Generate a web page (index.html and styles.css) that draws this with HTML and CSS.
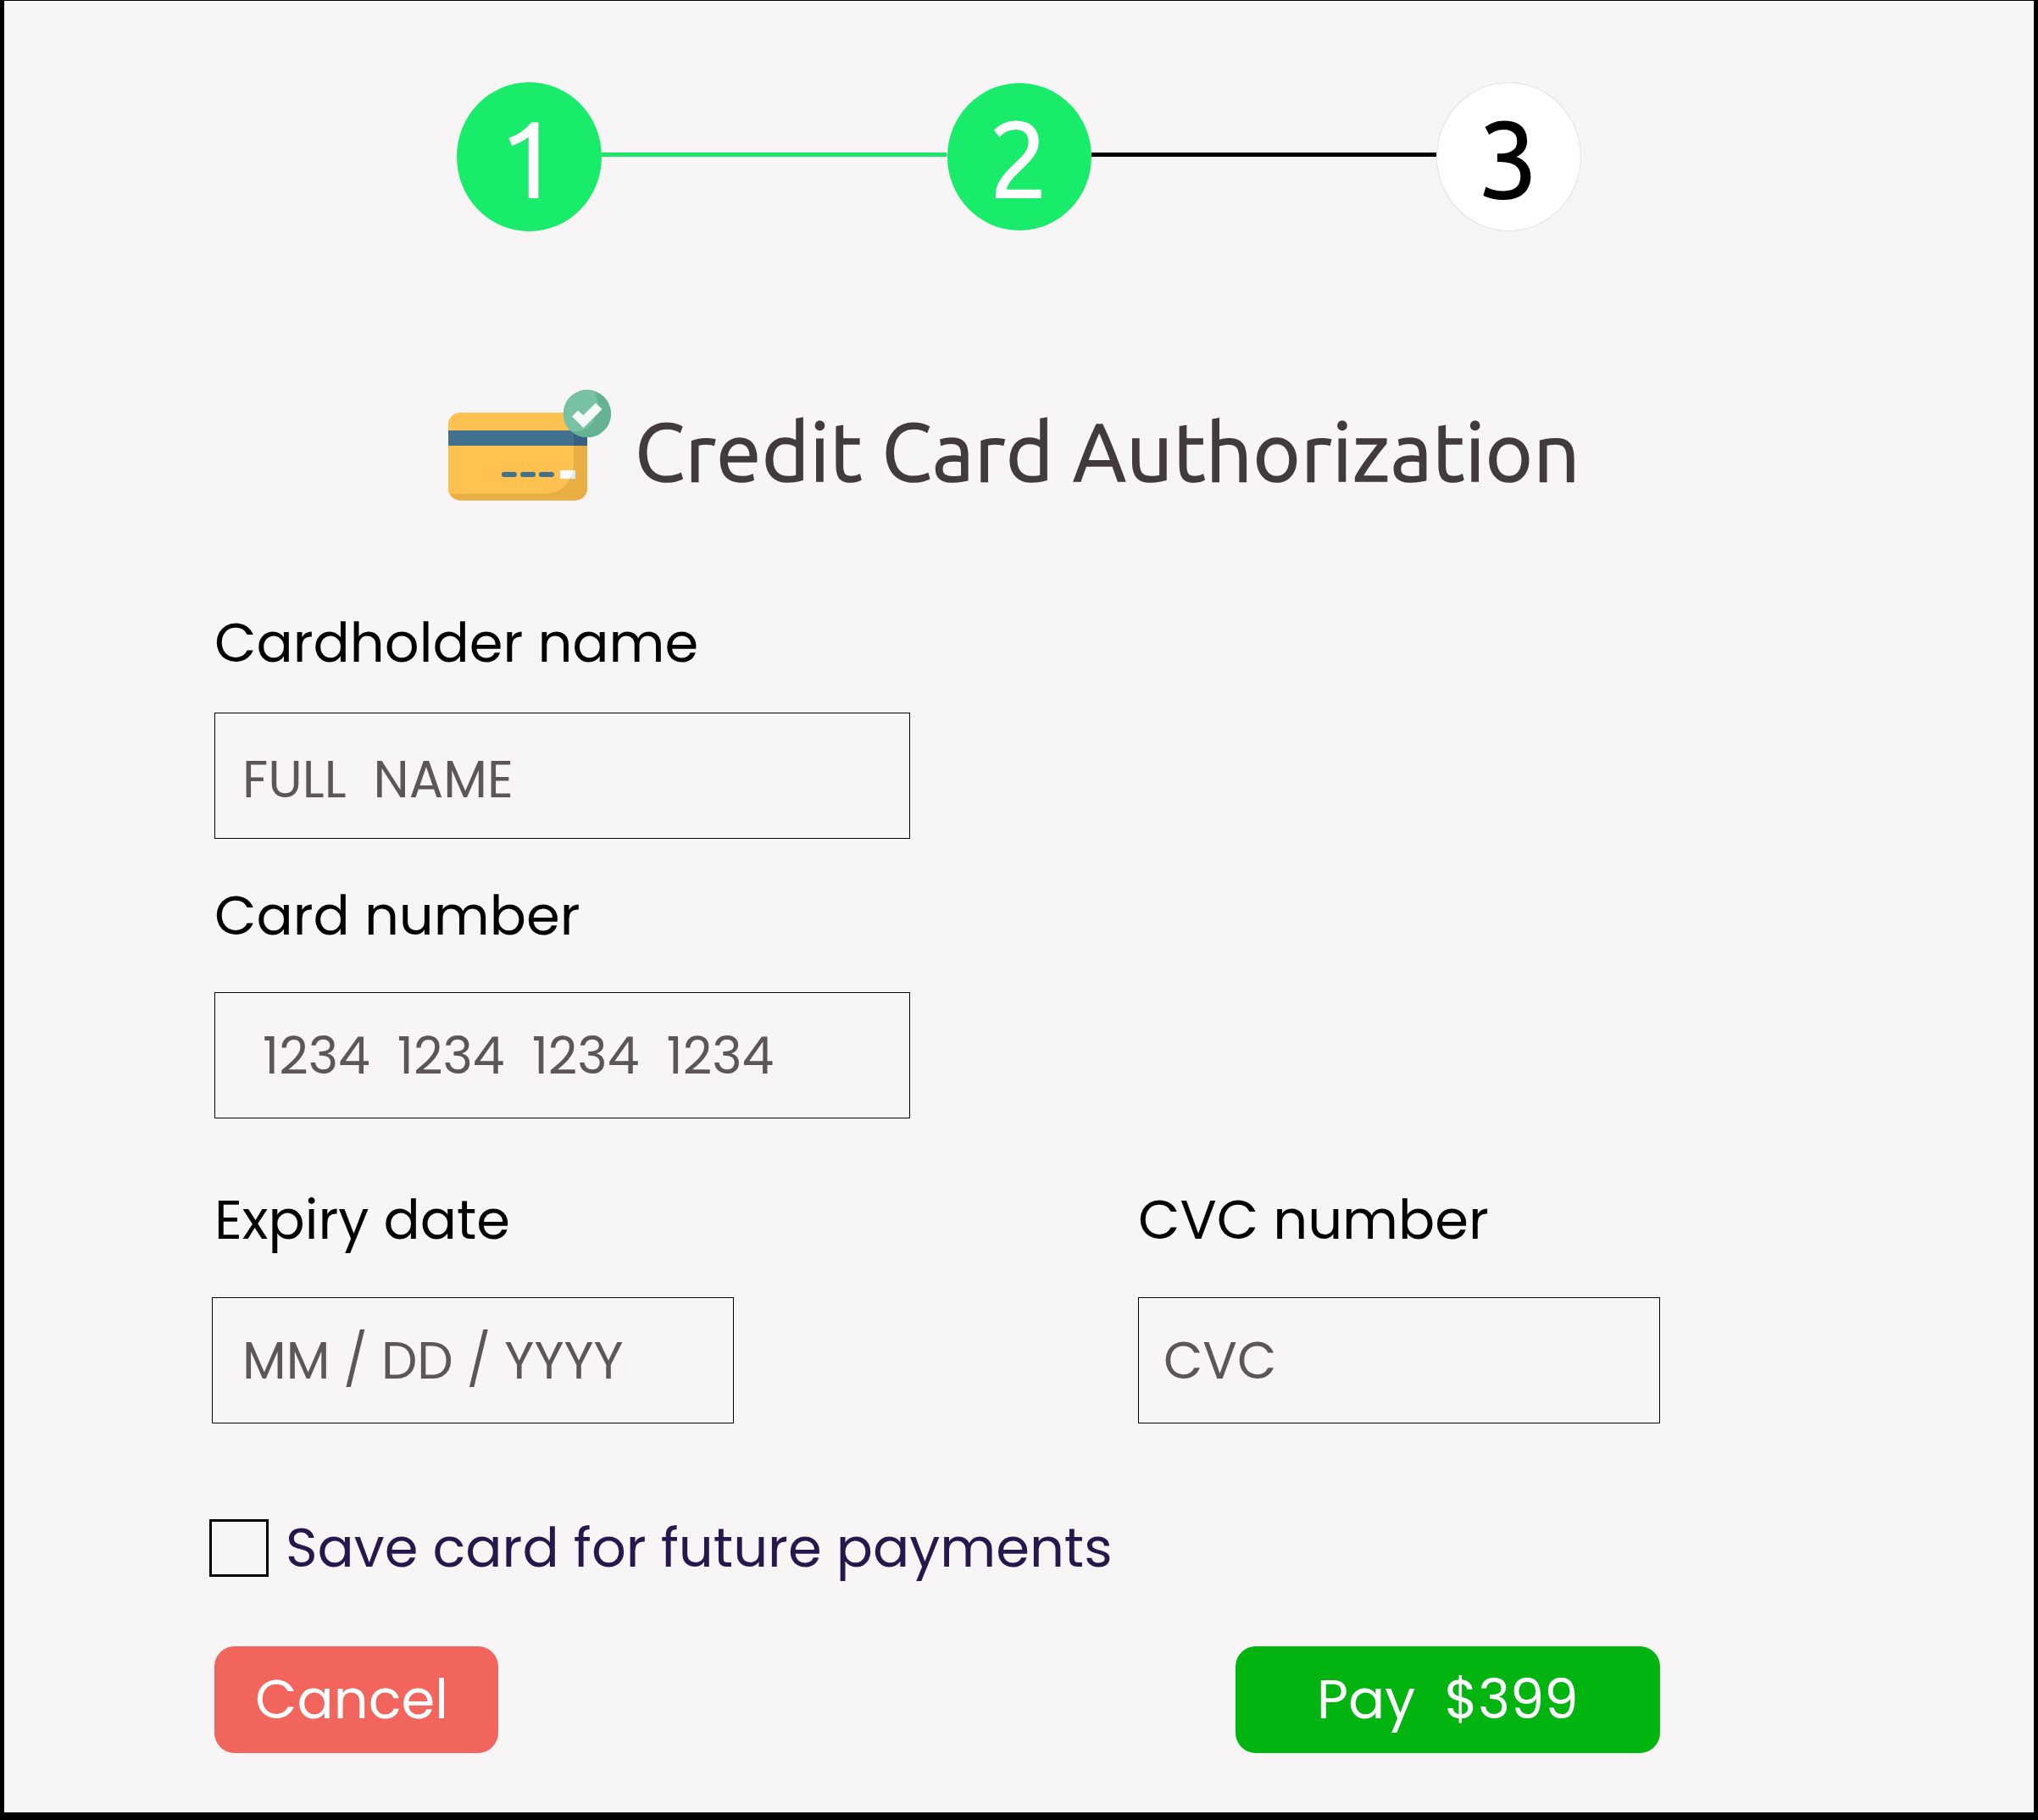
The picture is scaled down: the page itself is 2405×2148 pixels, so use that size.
FILE: index.html
```
<!DOCTYPE html>
<html lang="en">
<head>
<meta charset="utf-8">
<title>Credit Card Authorization</title>
<link rel="stylesheet" href="styles.css">
</head>
<body>
<main class="panel">
  <ol class="stepper">
    <li class="step step-done step-first">1</li>
    <li class="track track-done"></li>
    <li class="step step-done">2</li>
    <li class="track"></li>
    <li class="step step-next">3</li>
  </ol>

  <header class="heading">
    <svg class="card-icon" viewBox="0 0 194 134" aria-hidden="true">
      <defs>
        <clipPath id="card"><rect x="1" y="28.300" width="164" height="103.400" rx="14"/></clipPath>
        <clipPath id="badge"><circle cx="165" cy="29.3" r="28.3"/></clipPath>
      </defs>
      <g clip-path="url(#card)">
        <rect x="1" y="28" width="164" height="104" fill="#e9ae44"/>
        <path d="M1 28H149V92Q147 106 138 115Q129 123.700 115 123.700H1Z" fill="#ffc250"/>
        <rect x="1" y="49" width="164" height="18" fill="#42708f"/>
        <rect x="149" y="49" width="16" height="18" fill="#365f80"/>
      </g>
      <g fill="#42708f">
        <rect x="64" y="98" width="18" height="6" rx="3"/>
        <rect x="86" y="98" width="18" height="6" rx="3"/>
        <rect x="108" y="98" width="18" height="6" rx="3"/>
      </g>
      <rect x="133" y="96" width="18" height="10" fill="#f9fafa"/>
      <path d="M149 96H151V106H144Q148 101 149 96Z" fill="#e4e7ea"/>
      <g clip-path="url(#badge)">
        <circle cx="165" cy="29.3" r="28.3" fill="#65b292"/>
        <path d="M130 0H171Q177 6 177 16Q177 46 155 50Q147 51 140 48Z" fill="#78c2a4"/>
      </g>
      <path d="M147 32.500L154 25.500L160.500 31L175 16.500L182.500 24L160.500 46Z" fill="#f8fafa"/>
    </svg>
    <h1 class="title">Credit Card Authorization</h1>
  </header>

  <form class="form">
    <div class="field field-name">
      <div class="label">Cardholder name</div>
      <div class="box">FULL  NAME</div>
    </div>
    <div class="field field-number">
      <div class="label">Card number</div>
      <div class="box">1234  1234  1234  1234</div>
    </div>
    <div class="field-row">
      <div class="field field-expiry">
        <div class="label">Expiry date</div>
        <div class="box">MM / DD / YYYY</div>
      </div>
      <div class="field field-cvc">
        <div class="label">CVC number</div>
        <div class="box">CVC</div>
      </div>
    </div>
    <div class="save">
      <span class="checkbox" role="checkbox" aria-checked="false"></span>
      <span class="save-text">Save card for future payments</span>
    </div>
    <div class="actions">
      <div class="button cancel">Cancel</div>
      <div class="button pay">Pay  $399</div>
    </div>
  </form>
</main>
</body>
</html>
```
FILE: styles.css
```
* {
  box-sizing: border-box;
}

body {
  margin: 0;
  background: #000;
  font-family: Poppins, Inter, "Liberation Sans", sans-serif;
}

.panel {
  height: 2148px;
  padding: 96px 0 0;
  border: solid #000;
  border-width: 1px 5px 9px;
  background: #f7f5f6;
}

/* Progress */
.stepper {
  display: flex;
  align-items: center;
  height: 176px;
  margin: 0 0 0 534px;
  padding: 0;
  list-style: none;
  font-family: Ubuntu, "Noto Sans", sans-serif;
}

.step {
  display: flex;
  align-items: center;
  justify-content: center;
  width: 170px;
  height: 174px;
  padding: 1px 2px 0 0;
  border-radius: 50%;
  font-size: 127px;
  line-height: 172px;
  -webkit-text-stroke: 2px currentColor;
}

.step-done {
  background: #18ec6a;
  color: #fff;
}

.step-first {
  width: 171px;
  height: 176px;
  padding-right: 0;
}

.step-next {
  width: 171px;
  height: 176px;
  border: 1px solid #e3e1e2;
  background: #fff;
  color: #000;
}

.track {
  width: 407px;
  height: 5px;
  margin-top: -5px;
  background: #000;
}

.track-done {
  margin-right: 1px;
  background: #20e56c;
}

/* Heading */
.heading {
  display: flex;
  align-items: center;
  height: 134px;
  margin: 186px 0 0 523px;
}

.card-icon {
  width: 194px;
  height: 134px;
}

.title {
  margin: 0 0 0 27px;
  padding-top: 14px;
  color: #433a3c;
  font: 400 96px/120px Ubuntu, "Noto Sans", sans-serif;
  letter-spacing: 0.6px;
  white-space: nowrap;
  -webkit-text-stroke: 1.5px currentColor;
}

/* Fields */
.form {
  margin: 128px 0 0 248px;
  font-size: 64px;
}

.label {
  height: 74px;
  line-height: 76px;
  white-space: nowrap;
}

.box {
  display: flex;
  align-items: center;
  height: 149px;
  border: 1px solid #000;
  color: #5d5556;
  font-size: 60px;
  line-height: 70px;
  white-space: pre;
}

.field-name .box {
  width: 821px;
  margin-top: 46px;
  padding: 9px 0 0 32px;
}

.field-number {
  margin-top: 53px;
}

.field-number .box {
  width: 821px;
  margin-top: 54px;
  padding-left: 56px;
}

.field-row {
  display: flex;
  gap: 477px;
  margin: 82px 0 0 -3px;
}

.field-expiry,
.field-cvc {
  width: 616px;
}

.field-row .box {
  margin-top: 55px;
}

.field-expiry .label {
  padding-left: 3px;
}

.field-expiry .box {
  padding-left: 35px;
}

.field-cvc .box {
  padding-left: 29px;
}

/* Save option */
.save {
  display: flex;
  align-items: center;
  height: 68px;
  margin: 113px 0 0 -6px;
  color: #27174d;
}

.checkbox {
  width: 70px;
  height: 68px;
  border: 3px solid #000;
}

.save-text {
  margin-left: 20px;
  line-height: 68px;
  white-space: nowrap;
}

/* Buttons */
.actions {
  display: flex;
  justify-content: space-between;
  width: 1706px;
  margin-top: 82px;
}

.button {
  display: flex;
  align-items: center;
  height: 126px;
  border-radius: 24px;
  color: #fff;
  line-height: 74px;
  white-space: pre;
}

.cancel {
  width: 335px;
  padding-left: 48px;
  background: #f1655c;
}

.pay {
  width: 501px;
  padding-left: 96px;
  background: #02b410;
}
```
